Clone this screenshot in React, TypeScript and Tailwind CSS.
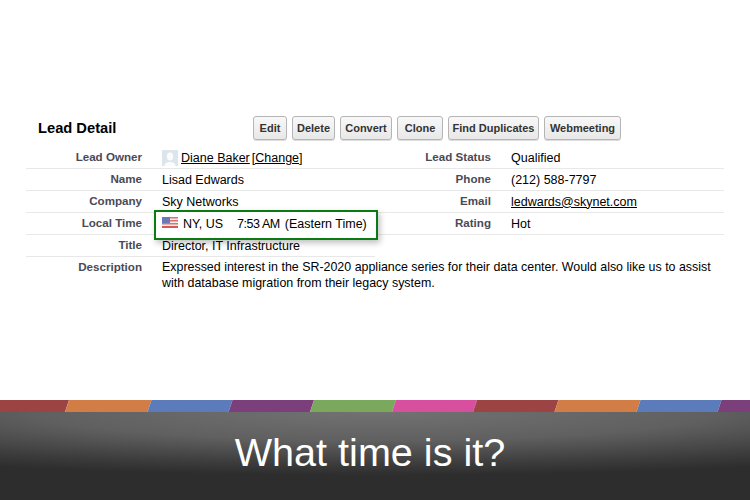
const buttons = [
  { label: "Edit", width: "w-[34px]" },
  { label: "Delete", width: "w-[43px]" },
  { label: "Convert", width: "w-[52px]" },
  { label: "Clone", width: "w-[46px]" },
  { label: "Find Duplicates", width: "w-[91px]" },
  { label: "Webmeeting", width: "w-[77px]" },
];

const stripColors = ["#9c4444", "#d27d46", "#5b7bbb", "#7b3f7c", "#7aa85c", "#d94fa0"];
const stripEdges = [-12.5, 69, 151.5, 232.5, 314, 396, 477, 558.5, 640.5, 721.5, 803];

function ColorStrip() {
  return (
    <svg width="750" height="12" viewBox="0 0 750 12" className="block">
      {stripEdges.slice(0, -1).map((edge, i) => (
        <polygon
          key={edge}
          points={`${edge},0 ${stripEdges[i + 1]},0 ${stripEdges[i + 1] - 4},12 ${edge - 4},12`}
          fill={stripColors[i % 6]}
        />
      ))}
    </svg>
  );
}

function Label({ children }: { children: string }) {
  return (
    <div className="mb-[4px] w-[116px] shrink-0 text-right text-[11.6px] font-bold leading-[15px] text-[#4a4a56]">
      {children}
    </div>
  );
}

function Value({ children }: { children: React.ReactNode }) {
  return <div className="relative ml-5 w-[213px] shrink-0 text-[12.5px] leading-[15px] text-black">{children}</div>;
}

function Row({
  left,
  leftValue,
  right,
  rightValue,
}: {
  left: string;
  leftValue: React.ReactNode;
  right?: string;
  rightValue?: React.ReactNode;
}) {
  return (
    <div className="flex h-[22px]">
      <div className="flex w-[349px] items-center border-b border-[#e8e8e8] pt-px">
        <Label>{left}</Label>
        <Value>{leftValue}</Value>
      </div>
      {right && (
        <div className="flex w-[349px] items-center border-b border-[#e8e8e8] pt-px">
          <Label>{right}</Label>
          <Value>{rightValue}</Value>
        </div>
      )}
    </div>
  );
}

function Avatar() {
  return (
    <svg width="16" height="16" viewBox="0 0 16 16" className="mr-[3px] inline-block shrink-0">
      <rect width="16" height="16" fill="#dde5ec" />
      <ellipse cx="8" cy="6.5" rx="3.2" ry="4" fill="#fbfcfd" />
      <path d="M2.5 16c0-3 2.5-4 5.5-4s5.5 1 5.5 4z" fill="#fbfcfd" />
    </svg>
  );
}

function Flag() {
  return (
    <svg width="16" height="11" viewBox="0 0 16 11" className="mr-[5px] -mt-[3px] shrink-0">
      <rect width="16" height="11" fill="#f0eef2" />
      <rect y="0" width="16" height="1.5" fill="#e0706e" />
      <rect y="3" width="16" height="1.5" fill="#e0706e" />
      <rect y="6" width="16" height="1.5" fill="#e0706e" />
      <rect y="9" width="16" height="2" fill="#d45a58" />
      <rect width="8" height="6" fill="#6a78b8" />
    </svg>
  );
}

export default function App() {
  return (
    <div className="flex h-[500px] w-[750px] flex-col overflow-hidden bg-white font-['Liberation_Sans',Arial,sans-serif]">
      <div className="h-[400px] px-[26px] pt-[116px]">
        <div className="flex h-6 items-center">
          <h2 className="ml-3 w-[215px] text-[14.7px] font-bold leading-4 text-black">Lead Detail</h2>
          <div className="flex gap-[5px]">
            {buttons.map((b) => (
              <button
                key={b.label}
                className={`${b.width} h-6 rounded-[3px] border border-[#b5b5b5] bg-gradient-to-b from-[#f8f8f8] to-[#e8e8e8] text-center text-[11px] font-bold text-[#333] shadow-[0_1px_0_#ddd]`}
              >
                {b.label}
              </button>
            ))}
          </div>
        </div>

        <div className="mt-[7px]">
          <Row
            left="Lead Owner"
            leftValue={
              <div className="flex items-center">
                <Avatar />
                <span className="underline">Diane Baker</span>
                <span className="ml-[2px] underline">[Change]</span>
              </div>
            }
            right="Lead Status"
            rightValue="Qualified"
          />
          <Row left="Name" leftValue="Lisad Edwards" right="Phone" rightValue="(212) 588-7797" />
          <Row
            left="Company"
            leftValue="Sky Networks"
            right="Email"
            rightValue={<span className="underline">ledwards@skynet.com</span>}
          />
          <Row
            left="Local Time"
            leftValue={
              <div className="flex items-center">
                <span className="absolute -left-2 -top-[7px] h-[30px] w-[224px] border-2 border-[#0b7a12] bg-white shadow-[2px_3px_6px_rgba(0,0,0,0.25)]" />
                <span className="relative flex items-center whitespace-pre">
                  <Flag />
                  <span>NY, US</span>
                  <span className="ml-[14px] tracking-[-0.45px]">7:53 AM</span>
                  <span className="ml-[5px]">(Eastern Time)</span>
                </span>
              </div>
            }
            right="Rating"
            rightValue="Hot"
          />
          <Row left="Title" leftValue="Director, IT Infrastructure" />
          <div className="mt-[2px] flex">
            <Label>Description</Label>
            <p className="ml-5 mt-px w-[560px] text-[12.43px] leading-[15.5px] text-black">
              Expressed interest in the SR-2020 appliance series for their data center. Would also like us to assist
              with database migration from their legacy system.
            </p>
          </div>
        </div>
      </div>

      <ColorStrip />
      <div className="flex h-[88px] justify-center bg-[radial-gradient(ellipse_100%_72%_at_50%_0%,#727272_0%,#606060_45%,#3c3c3c_82%,#2d2d2d_100%)] pr-[10px] pt-[16px]">
        <span className="text-[39.6px] leading-[48px] text-white">What time is it?</span>
      </div>
    </div>
  );
}
